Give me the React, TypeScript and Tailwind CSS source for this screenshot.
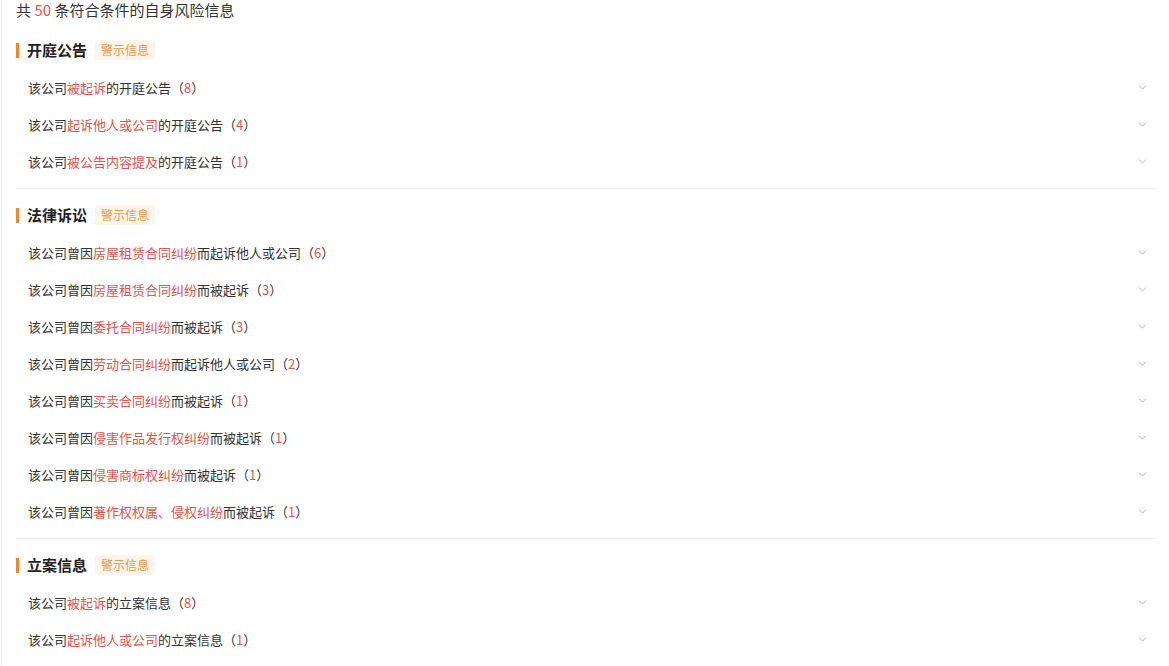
import { ChevronDown } from "lucide-react";

type Row = { pre: string; hl: string; post: string; count: number };
type Section = { title: string; rows: Row[] };

const sections: Section[] = [
  {
    title: "开庭公告",
    rows: [
      { pre: "该公司", hl: "被起诉", post: "的开庭公告", count: 8 },
      { pre: "该公司", hl: "起诉他人或公司", post: "的开庭公告", count: 4 },
      { pre: "该公司", hl: "被公告内容提及", post: "的开庭公告", count: 1 },
    ],
  },
  {
    title: "法律诉讼",
    rows: [
      { pre: "该公司曾因", hl: "房屋租赁合同纠纷", post: "而起诉他人或公司", count: 6 },
      { pre: "该公司曾因", hl: "房屋租赁合同纠纷", post: "而被起诉", count: 3 },
      { pre: "该公司曾因", hl: "委托合同纠纷", post: "而被起诉", count: 3 },
      { pre: "该公司曾因", hl: "劳动合同纠纷", post: "而起诉他人或公司", count: 2 },
      { pre: "该公司曾因", hl: "买卖合同纠纷", post: "而被起诉", count: 1 },
      { pre: "该公司曾因", hl: "侵害作品发行权纠纷", post: "而被起诉", count: 1 },
      { pre: "该公司曾因", hl: "侵害商标权纠纷", post: "而被起诉", count: 1 },
      { pre: "该公司曾因", hl: "著作权权属、侵权纠纷", post: "而被起诉", count: 1 },
    ],
  },
  {
    title: "立案信息",
    rows: [
      { pre: "该公司", hl: "被起诉", post: "的立案信息", count: 8 },
      { pre: "该公司", hl: "起诉他人或公司", post: "的立案信息", count: 1 },
    ],
  },
];

const font = { fontFamily: '"Noto Sans CJK SC", "Noto Sans", sans-serif' };

export default function App() {
  return (
    <div
      className="min-h-screen bg-white ml-[1px] border-l border-[#eeeeee] pl-[14px] pr-[12px] text-[#333333]"
      style={font}
    >
      <div className="h-[20px] leading-[20px] text-[15px]">
        共 <span className="text-[#e5534b]">50</span> 条符合条件的自身风险信息
      </div>

      {sections.map((s, i) => (
        <div
          key={s.title}
          className={
            (i === 0 ? "pt-[18px] " : "pt-[14px] ") +
            (i < sections.length - 1 ? "pb-[8px] border-b border-[#f0f0f0]" : "")
          }
        >
          {/* section header */}
          <div className="h-[24px] flex items-center">
            <span className="w-[3px] h-[15px] bg-[#f0862d]" />
            <span className="ml-[8px] text-[15px] font-bold text-[#222222]">{s.title}</span>
            <span className="ml-[8px] h-[20px] px-[6px] flex items-center rounded-sm bg-[#fff4ea] text-[#f0943f] text-[12px]">
              警示信息
            </span>
          </div>

          <div className="mt-[7px]">
            {s.rows.map((r, j) => (
              <div key={j} className="h-[37px] flex items-center justify-between pl-[12px] pr-[8px]">
                <span className="text-[13px]">
                  {r.pre}
                  <span className="text-[#e5534b]">{r.hl}</span>
                  {r.post}（<span className="text-[#e5534b]">{r.count}</span>）
                </span>
                <ChevronDown className="w-[13px] h-[13px] text-[#a0a0a0]" strokeWidth={1.5} />
              </div>
            ))}
          </div>
        </div>
      ))}
    </div>
  );
}
